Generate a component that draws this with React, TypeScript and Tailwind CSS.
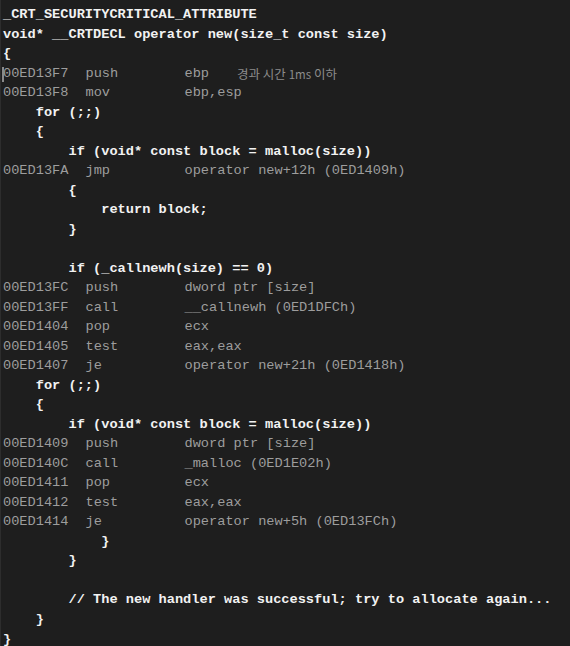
type Line =
  | { kind: "src"; text: string }
  | { kind: "asm"; addr: string; op: string; arg: string; note?: string }
  | { kind: "blank" };

const lines: Line[] = [
  { kind: "src", text: "_CRT_SECURITYCRITICAL_ATTRIBUTE" },
  { kind: "src", text: "void* __CRTDECL operator new(size_t const size)" },
  { kind: "src", text: "{" },
  { kind: "asm", addr: "00ED13F7", op: "push", arg: "ebp", note: "경과 시간 1ms 이하" },
  { kind: "asm", addr: "00ED13F8", op: "mov", arg: "ebp,esp" },
  { kind: "src", text: "    for (;;)" },
  { kind: "src", text: "    {" },
  { kind: "src", text: "        if (void* const block = malloc(size))" },
  { kind: "asm", addr: "00ED13FA", op: "jmp", arg: "operator new+12h (0ED1409h)" },
  { kind: "src", text: "        {" },
  { kind: "src", text: "            return block;" },
  { kind: "src", text: "        }" },
  { kind: "blank" },
  { kind: "src", text: "        if (_callnewh(size) == 0)" },
  { kind: "asm", addr: "00ED13FC", op: "push", arg: "dword ptr [size]" },
  { kind: "asm", addr: "00ED13FF", op: "call", arg: "__callnewh (0ED1DFCh)" },
  { kind: "asm", addr: "00ED1404", op: "pop", arg: "ecx" },
  { kind: "asm", addr: "00ED1405", op: "test", arg: "eax,eax" },
  { kind: "asm", addr: "00ED1407", op: "je", arg: "operator new+21h (0ED1418h)" },
  { kind: "src", text: "    for (;;)" },
  { kind: "src", text: "    {" },
  { kind: "src", text: "        if (void* const block = malloc(size))" },
  { kind: "asm", addr: "00ED1409", op: "push", arg: "dword ptr [size]" },
  { kind: "asm", addr: "00ED140C", op: "call", arg: "_malloc (0ED1E02h)" },
  { kind: "asm", addr: "00ED1411", op: "pop", arg: "ecx" },
  { kind: "asm", addr: "00ED1412", op: "test", arg: "eax,eax" },
  { kind: "asm", addr: "00ED1414", op: "je", arg: "operator new+5h (0ED13FCh)" },
  { kind: "src", text: "            }" },
  { kind: "src", text: "        }" },
  { kind: "blank" },
  { kind: "src", text: "        // The new handler was successful; try to allocate again..." },
  { kind: "src", text: "    }" },
  { kind: "src", text: "}" },
];

export default function App() {
  return (
    <div className="w-[570px] h-[646px] overflow-hidden bg-[#1e1e1e] pt-[5px] pl-[2px] font-['Liberation_Mono','DejaVu_Sans_Mono',monospace] text-[13.65px] border-l border-[#2d2d2d]">
      {lines.map((l, i) => {
        if (l.kind === "blank") return <div key={i} className="h-[19.53px]" />;
        if (l.kind === "src")
          return (
            <div key={i} className="h-[19.53px] leading-[19.53px] whitespace-pre font-bold text-[#f2f2f2]">
              {l.text}
            </div>
          );
        return (
          <div key={i} className="relative h-[19.53px] leading-[19.53px] whitespace-pre text-[#9d9d9d] flex">
            {i === 3 && <span className="absolute left-[-1px] top-[3px] h-[15px] w-[2px] bg-[#8a8a8a]" />}
            <span className="w-[82.5px]">{l.addr}</span>
            <span className="w-[99px]">{l.op}</span>
            <span>{l.arg}</span>
            {l.note && (
              <span className="ml-[28px] font-['Noto_Sans_CJK_KR',sans-serif] text-[12.5px] text-[#8c8c8c]">
                경과 시간 <span className="text-[11.5px]">1ms</span> 이하
              </span>
            )}
          </div>
        );
      })}
    </div>
  );
}
